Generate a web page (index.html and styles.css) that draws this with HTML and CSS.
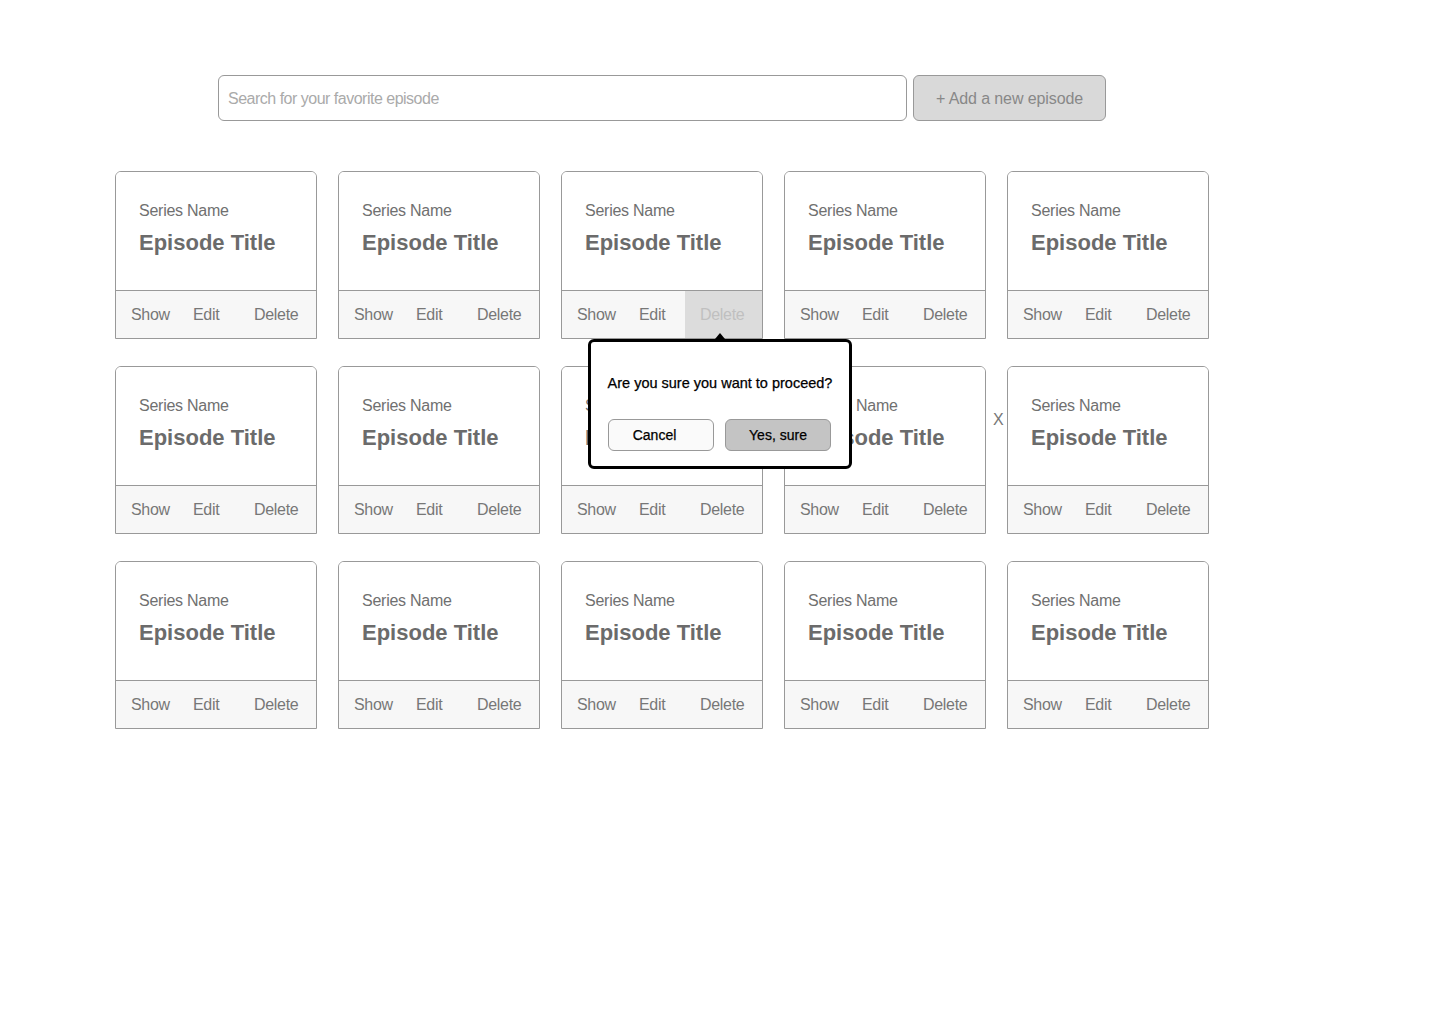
FILE: index.html
```html
<!DOCTYPE html>
<html>
<head>
<meta charset="utf-8">
<link rel="stylesheet" href="styles.css">
</head>
<body>
<div class="page">
  <div class="toolbar">
    <input class="search" type="text" placeholder="Search for your favorite episode">
    <button class="add">+ Add a new episode</button>
  </div>
  <div class="grid">
    <div class="card"><div class="card-body"><div class="series">Series Name</div><div class="title">Episode Title</div></div><div class="card-foot"><span class="act show">Show</span><span class="act edit">Edit</span><span class="act del">Delete</span></div></div>
    <div class="card"><div class="card-body"><div class="series">Series Name</div><div class="title">Episode Title</div></div><div class="card-foot"><span class="act show">Show</span><span class="act edit">Edit</span><span class="act del">Delete</span></div></div>
    <div class="card"><div class="card-body"><div class="series">Series Name</div><div class="title">Episode Title</div></div><div class="card-foot"><span class="act show">Show</span><span class="act edit">Edit</span><span class="act del active">Delete</span></div></div>
    <div class="card"><div class="card-body"><div class="series">Series Name</div><div class="title">Episode Title</div></div><div class="card-foot"><span class="act show">Show</span><span class="act edit">Edit</span><span class="act del">Delete</span></div></div>
    <div class="card"><div class="card-body"><div class="series">Series Name</div><div class="title">Episode Title</div></div><div class="card-foot"><span class="act show">Show</span><span class="act edit">Edit</span><span class="act del">Delete</span></div></div>

    <div class="card"><div class="card-body"><div class="series">Series Name</div><div class="title">Episode Title</div></div><div class="card-foot"><span class="act show">Show</span><span class="act edit">Edit</span><span class="act del">Delete</span></div></div>
    <div class="card"><div class="card-body"><div class="series">Series Name</div><div class="title">Episode Title</div></div><div class="card-foot"><span class="act show">Show</span><span class="act edit">Edit</span><span class="act del">Delete</span></div></div>
    <div class="card"><div class="card-body"><div class="series">Series Name</div><div class="title">Episode Title</div></div><div class="card-foot"><span class="act show">Show</span><span class="act edit">Edit</span><span class="act del">Delete</span></div></div>
    <div class="card"><div class="card-body"><div class="series">Series Name</div><div class="title">Episode Title</div></div><div class="card-foot"><span class="act show">Show</span><span class="act edit">Edit</span><span class="act del">Delete</span></div></div>
    <div class="card"><div class="card-body"><div class="series">Series Name</div><div class="title">Episode Title</div></div><div class="card-foot"><span class="act show">Show</span><span class="act edit">Edit</span><span class="act del">Delete</span></div></div>

    <div class="card"><div class="card-body"><div class="series">Series Name</div><div class="title">Episode Title</div></div><div class="card-foot"><span class="act show">Show</span><span class="act edit">Edit</span><span class="act del">Delete</span></div></div>
    <div class="card"><div class="card-body"><div class="series">Series Name</div><div class="title">Episode Title</div></div><div class="card-foot"><span class="act show">Show</span><span class="act edit">Edit</span><span class="act del">Delete</span></div></div>
    <div class="card"><div class="card-body"><div class="series">Series Name</div><div class="title">Episode Title</div></div><div class="card-foot"><span class="act show">Show</span><span class="act edit">Edit</span><span class="act del">Delete</span></div></div>
    <div class="card"><div class="card-body"><div class="series">Series Name</div><div class="title">Episode Title</div></div><div class="card-foot"><span class="act show">Show</span><span class="act edit">Edit</span><span class="act del">Delete</span></div></div>
    <div class="card"><div class="card-body"><div class="series">Series Name</div><div class="title">Episode Title</div></div><div class="card-foot"><span class="act show">Show</span><span class="act edit">Edit</span><span class="act del">Delete</span></div></div>
  </div>

  <div class="close-x">X</div>

  <div class="popup">
    <div class="popup-arrow"></div>
    <div class="popup-text">Are you sure you want to proceed?</div>
    <div class="popup-buttons">
      <button class="pbtn cancel">Cancel</button>
      <button class="pbtn yes">Yes, sure</button>
    </div>
  </div>
</div>
</body>
</html>
```

FILE: styles.css
```css
* { box-sizing: border-box; }

html, body {
  margin: 0;
  padding: 0;
  background: #fff;
  font-family: "Liberation Sans", Arial, Helvetica, sans-serif;
}

.page {
  position: relative;
  width: 1440px;
  height: 1024px;
}

.toolbar {
  display: flex;
  gap: 6px;
  padding-top: 75px;
  padding-left: 218px;
}

.search {
  width: 689px;
  height: 46px;
  border: 1px solid #999;
  border-radius: 6px;
  padding: 1px 9px 0;
  font-family: "Liberation Sans", Arial, sans-serif;
  font-size: 16px;
  letter-spacing: -0.5px;
  color: #666;
  outline: none;
}

.search::placeholder {
  color: #aaa;
}

.add {
  width: 193px;
  height: 46px;
  background: #d9d9d9;
  border: 1px solid #999;
  border-radius: 6px;
  font-family: "Liberation Sans", Arial, sans-serif;
  font-size: 16px;
  letter-spacing: -0.1px;
  color: #888;
  padding: 2px 0 0;
}

.grid {
  display: grid;
  grid-template-columns: repeat(5, 202px);
  column-gap: 21px;
  row-gap: 27px;
  margin-top: 50px;
  margin-left: 115px;
}

.card {
  border: 1px solid #999;
  border-radius: 6px 6px 0 0;
  overflow: hidden;
  height: 168px;
  display: flex;
  flex-direction: column;
}

.card-body {
  flex: 0 0 118px;
  padding: 29px 0 0 23px;
  background: #fff;
}

.series {
  font-size: 16px;
  letter-spacing: -0.25px;
  line-height: 20px;
  color: #707070;
}

.title {
  margin-top: 9px;
  font-size: 22px;
  line-height: 26px;
  font-weight: bold;
  color: #6b6b6b;
}

.card-foot {
  flex: 1;
  display: flex;
  border-top: 1px solid #999;
  background: #f7f7f7;
}

.act {
  font-size: 16px;
  letter-spacing: -0.3px;
  line-height: 46px;
  padding-top: 1px;
  color: #777;
}

.show {
  width: 62px;
  padding-left: 15px;
}

.edit {
  width: 61px;
  padding-left: 15px;
}

.del {
  flex: 1;
  padding-left: 15px;
}

.del.active {
  background: #dcdcdc;
  color: #c0c0c0;
}

.close-x {
  position: absolute;
  left: 993px;
  top: 411px;
  font-size: 16px;
  line-height: 18px;
  color: #777;
}

.popup {
  position: absolute;
  left: 588px;
  top: 339px;
  width: 264px;
  height: 130px;
  border: 3px solid #000;
  border-radius: 6px;
  background: #fff;
  display: flex;
  flex-direction: column;
  align-items: center;
}

.popup-arrow {
  position: absolute;
  left: 124px;
  top: -9px;
  width: 0;
  height: 0;
  border-left: 5px solid transparent;
  border-right: 5px solid transparent;
  border-bottom: 6px solid #000;
}

.popup-text {
  margin-top: 32px;
  font-size: 14.5px;
  line-height: 18px;
  color: #000;
  -webkit-text-stroke: 0.25px #000;
}

.popup-buttons {
  align-self: stretch;
  display: flex;
  gap: 11px;
  margin-top: 27px;
  padding-left: 17px;
}

.pbtn {
  width: 106px;
  height: 32px;
  border: 1px solid #999;
  border-radius: 6px;
  font-family: "Liberation Sans", Arial, sans-serif;
  font-size: 14px;
  color: #000;
  padding: 0;
  -webkit-text-stroke: 0.25px #000;
}

.cancel {
  background: #fafafa;
  padding-right: 13px;
}

.yes {
  background: #c4c4c4;
}
```
